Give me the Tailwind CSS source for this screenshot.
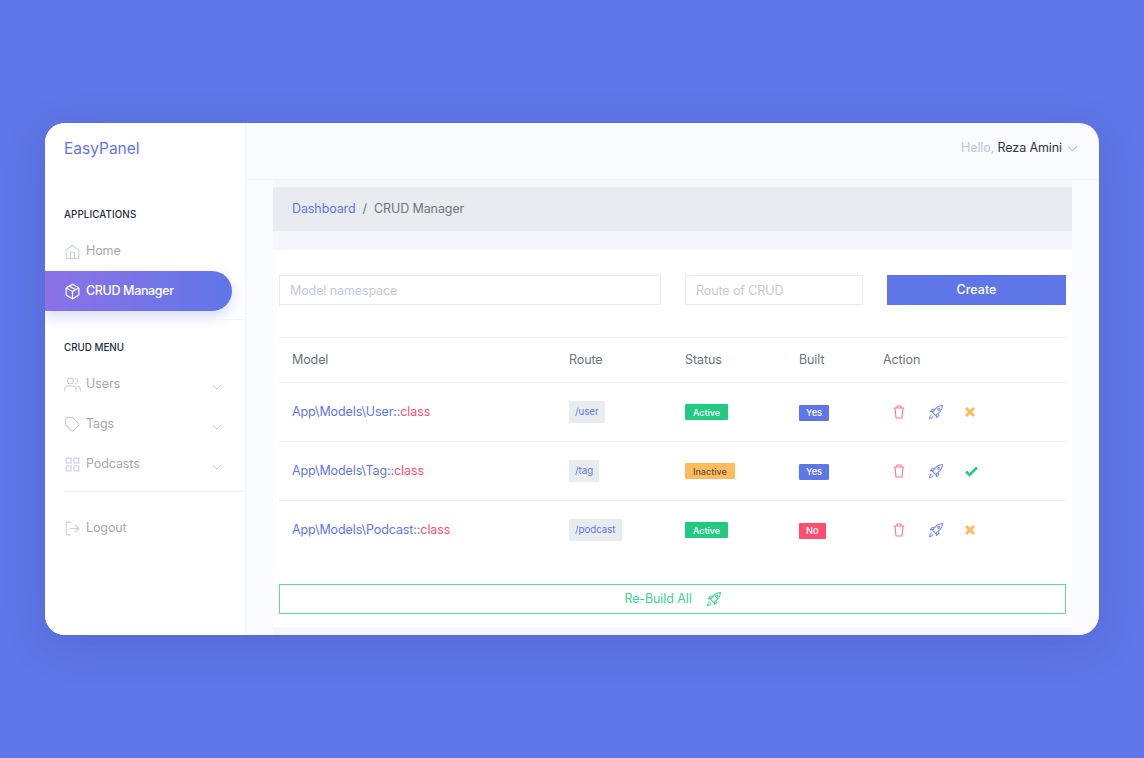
<!DOCTYPE html>
<html>
<head>
<meta charset="utf-8">
<script src="https://cdn.jsdelivr.net/npm/@tailwindcss/browser@4"></script>
</head>
<body class="m-0 h-[758px] w-[1144px] overflow-hidden bg-[#5f76e8] font-['Inter',sans-serif]">
<div class="pt-[123px] pl-[45px]">
<div class="flex h-[512px] w-[1054px] overflow-hidden rounded-[20px] bg-[#f9fbfe] shadow-[0_10px_40px_rgba(40,50,120,0.18)]">
  <!-- sidebar -->
  <aside class="flex w-[200px] shrink-0 flex-col bg-white">
    <div class="pl-[19px] pt-[15px] text-[15.5px] leading-[22px] text-[#5f76e8]">EasyPanel</div>
    <div class="pl-[19px] pt-[48px] text-[9.8px] leading-[14px] font-medium tracking-[0.1px] text-[#1c2d41]">APPLICATIONS</div>
    <div class="mt-[9px] flex h-[40px] items-center pl-[19px] text-[12.5px] tracking-[-0.1px] text-[#a9a9a9]">
      <svg class="mr-[5px] h-[17px] w-[17px]" viewBox="0 0 24 24" fill="none" stroke="#c5cfde" stroke-width="1.5" stroke-linejoin="round"><path d="M3 10l9-7 9 7v11a1 1 0 0 1-1 1H4a1 1 0 0 1-1-1z"/><path d="M9 22V13h6v9"/></svg>Home
    </div>
    <div class="flex h-[40px] w-[187px] items-center rounded-r-[20px] bg-gradient-to-r from-[#8b71e6] to-[#5f76e8] pl-[19px] text-[12.5px] font-medium tracking-[-0.35px] text-white shadow-[0_6px_14px_rgba(95,118,232,0.25)]">
      <svg class="mr-[5px] h-[17px] w-[17px]" viewBox="0 0 24 24" fill="none" stroke="white" stroke-width="1.7" stroke-linejoin="round" stroke-linecap="round"><path d="M21 16V8a2 2 0 0 0-1-1.7l-7-4a2 2 0 0 0-2 0l-7 4A2 2 0 0 0 3 8v8a2 2 0 0 0 1 1.7l7 4a2 2 0 0 0 2 0l7-4a2 2 0 0 0 1-1.7z"/><path d="M3.3 7L12 12l8.7-5M12 22V12M7.5 4.2l9 5.2"/></svg>CRUD Manager
    </div>
    <div class="mt-[8px] ml-[19px] border-t border-[#f1f3f8]"></div>
    <div class="pl-[19px] pt-[21px] text-[9.8px] leading-[14px] font-medium text-[#1c2d41]">CRUD MENU</div>
    <div class="mt-[8px] flex h-[40px] items-center pl-[19px] pr-[23px] pt-[2px] text-[12.5px] tracking-[-0.1px] text-[#a9a9a9]">
      <svg class="mr-[5px] h-[17px] w-[17px]" viewBox="0 0 24 24" fill="none" stroke="#c5cfde" stroke-width="1.5" stroke-linecap="round"><circle cx="9" cy="7" r="4"/><path d="M1 21v-2a5 5 0 0 1 5-5h6a5 5 0 0 1 5 5v2M16 3.1a4 4 0 0 1 0 7.8M23 21v-2a5 5 0 0 0-3.5-4.7"/></svg>Users
      <svg class="mt-[5px] ml-auto h-[10px] w-[10px]" viewBox="0 0 12 12" fill="none" stroke="#b8bfca" stroke-width="1.1"><path d="M1 3.5l5 5 5-5"/></svg>
    </div>
    <div class="flex h-[40px] items-center pl-[19px] pr-[23px] pt-[2px] text-[12.5px] tracking-[-0.1px] text-[#a9a9a9]">
      <svg class="mr-[5px] h-[17px] w-[17px]" viewBox="0 0 24 24" fill="none" stroke="#c5cfde" stroke-width="1.5" stroke-linejoin="round" stroke-linecap="round"><path d="M20.6 13.4l-7.2 7.2a2 2 0 0 1-2.8 0L2 12V2h10l8.6 8.6a2 2 0 0 1 0 2.8z"/><path d="M7 7h.01"/></svg>Tags
      <svg class="mt-[5px] ml-auto h-[10px] w-[10px]" viewBox="0 0 12 12" fill="none" stroke="#b8bfca" stroke-width="1.1"><path d="M1 3.5l5 5 5-5"/></svg>
    </div>
    <div class="flex h-[40px] items-center pl-[19px] pr-[23px] pt-[2px] text-[12.5px] tracking-[-0.1px] text-[#a9a9a9]">
      <svg class="mr-[5px] h-[17px] w-[17px]" viewBox="0 0 24 24" fill="none" stroke="#c5cfde" stroke-width="1.5"><rect x="3" y="3" width="7" height="7"/><rect x="14" y="3" width="7" height="7"/><rect x="14" y="14" width="7" height="7"/><rect x="3" y="14" width="7" height="7"/></svg>Podcasts
      <svg class="mt-[5px] ml-auto h-[10px] w-[10px]" viewBox="0 0 12 12" fill="none" stroke="#b8bfca" stroke-width="1.1"><path d="M1 3.5l5 5 5-5"/></svg>
    </div>
    <div class="mt-[8px] ml-[19px] border-t border-[#f1f3f8]"></div>
    <div class="mt-[16px] flex h-[40px] items-center pl-[19px] text-[12.5px] tracking-[-0.1px] text-[#a9a9a9]">
      <svg class="mr-[5px] h-[17px] w-[17px]" viewBox="0 0 24 24" fill="none" stroke="#c5cfde" stroke-width="1.5" stroke-linecap="round" stroke-linejoin="round"><path d="M9 21H5a2 2 0 0 1-2-2V5a2 2 0 0 1 2-2h4M16 17l5-5-5-5M21 12H9"/></svg>Logout
    </div>
  </aside>
  <!-- main -->
  <main class="flex min-w-0 flex-1 flex-col border-l border-[#f5f7fb]">
    <header class="flex h-[57px] shrink-0 items-start justify-end border-b border-[#f1f3f7] pt-[15px] pr-[21px] text-[12.500px] leading-[18px] tracking-[-0.1px]">
      <span class="pt-[1px] text-[#c0c6d4]">Hello,&nbsp;</span><span class="pt-[1px] text-[#2f3542]">Reza Amini</span>
      <svg class="mt-[5px] ml-[5px] h-[11px] w-[11px]" viewBox="0 0 12 12" fill="none" stroke="#b8bfca" stroke-width="1.1"><path d="M1 3.5l5 5 5-5"/></svg>
    </header>
    <div class="ml-[27px] w-[799px] flex-1 bg-[#f5f7fb] pt-[7px]">
      <nav class="flex h-[44px] items-center bg-[#e9ecef] pl-[19px] text-[12.500px] tracking-[-0.1px]">
        <span class="text-[#5f76e8]">Dashboard</span><span class="mx-[7px] text-[#6c757d]">/</span><span class="text-[#6c757d]">CRUD Manager</span>
      </nav>
      <section class="mt-[19px] h-[377px] bg-white px-[6px] pt-[25px]">
        <form class="flex h-[30px] gap-[24px]">
          <input placeholder="Model namespace" class="h-[30px] w-[382px] border border-[#e9ecef] bg-white px-[10px] text-[12.500px] tracking-[-0.1px] placeholder:text-[#c4c9d8]">
          <input placeholder="Route of CRUD" class="h-[30px] w-[178px] border border-[#e9ecef] bg-white px-[10px] text-[12.500px] tracking-[-0.1px] placeholder:text-[#c4c9d8]">
          <button type="button" class="h-[30px] w-[179px] bg-[#5f76e8] text-[12.500px] font-medium text-white">Create</button>
        </form>
        <div class="mt-[32px] grid grid-cols-[277px_116px_114px_84px_1fr] border-y border-[#eef0f3] h-[46px] items-center pl-[13px] text-[12.500px] tracking-[-0.1px] text-[#6c757d]">
          <div>Model</div><div>Route</div><div>Status</div><div>Built</div><div>Action</div>
        </div>

        <div class="grid h-[59px] grid-cols-[277px_116px_114px_84px_1fr] items-center border-b border-[#eef0f3] pl-[13px] text-[12.500px] tracking-[-0.1px]">
          <div class="text-[#5f76e8]">App\Models\User::<span class="text-[#ff4f70]">class</span></div>
          <div><span class="inline-flex h-[22px] items-center bg-[#e9ecef] px-[6px] text-[9.700px] tracking-normal text-[#5f76e8]">/user</span></div>
          <div><span class="inline-flex h-[16px] items-center rounded-[1px] bg-[#22ca80] px-[8px] text-[9px] font-medium tracking-normal text-white">Active</span></div>
          <div><span class="inline-flex h-[16px] items-center rounded-[1px] bg-[#5f76e8] px-[7px] text-[9.300px] font-medium tracking-normal text-white">Yes</span></div>
          <div class="flex items-center pl-[9px]">
            <svg class="h-[14px] w-[14px]" viewBox="0 0 14 14" fill="none" stroke="#ff7a93" stroke-width="1.2"><path d="M2 3h10M3 3l1 10h6l1-10M5 3V1h4v2"/></svg>
            <svg class="ml-[22px] h-[15px] w-[15px]" viewBox="0 0 14 14" fill="none" stroke="#7d8ff0" stroke-width="1" stroke-linejoin="round"><path d="M4.200 6.800L8 2.500C9.500 1 12 .7 13.500.500 13.300 2 13 4.500 11.500 6L7.200 9.800zM4.800 6.200H2.200L4 4H7M7.800 9.200V11.800L10 10V7M3.500 9c-1.200.6-2 2-2.200 3.700 1.700-.2 3.100-1 3.700-2.200"/><circle cx="10" cy="4" r="1"/></svg>
            <svg class="ml-[21px] h-[12px] w-[12px]" viewBox="0 0 12 12" fill="none" stroke="#ffbc5e" stroke-width="3"><path d="M2 2l8 8M10 2l-8 8"/></svg>
          </div>
        </div>

        <div class="grid h-[59px] grid-cols-[277px_116px_114px_84px_1fr] items-center border-b border-[#eef0f3] pl-[13px] text-[12.500px] tracking-[-0.1px]">
          <div class="text-[#5f76e8]">App\Models\Tag::<span class="text-[#ff4f70]">class</span></div>
          <div><span class="inline-flex h-[22px] items-center bg-[#e9ecef] px-[6px] text-[9.700px] tracking-normal text-[#5f76e8]">/tag</span></div>
          <div><span class="inline-flex h-[16px] items-center rounded-[1px] bg-[#ffbc5e] px-[8px] text-[9px] font-medium tracking-normal text-[#5c5346]">Inactive</span></div>
          <div><span class="inline-flex h-[16px] items-center rounded-[1px] bg-[#5f76e8] px-[7px] text-[9.300px] font-medium tracking-normal text-white">Yes</span></div>
          <div class="flex items-center pl-[9px]">
            <svg class="h-[14px] w-[14px]" viewBox="0 0 14 14" fill="none" stroke="#ff7a93" stroke-width="1.2"><path d="M2 3h10M3 3l1 10h6l1-10M5 3V1h4v2"/></svg>
            <svg class="ml-[22px] h-[15px] w-[15px]" viewBox="0 0 14 14" fill="none" stroke="#7d8ff0" stroke-width="1" stroke-linejoin="round"><path d="M4.200 6.800L8 2.500C9.500 1 12 .7 13.500.500 13.300 2 13 4.500 11.500 6L7.200 9.800zM4.800 6.200H2.200L4 4H7M7.800 9.200V11.800L10 10V7M3.500 9c-1.200.6-2 2-2.200 3.700 1.700-.2 3.100-1 3.700-2.200"/><circle cx="10" cy="4" r="1"/></svg>
            <svg class="ml-[22px] h-[12px] w-[13px]" viewBox="0 0 13 12" fill="none" stroke="#22ca80" stroke-width="2.600"><path d="M1 6.500l3.500 3.500L12 2.500"/></svg>
          </div>
        </div>

        <div class="grid h-[58px] grid-cols-[277px_116px_114px_84px_1fr] items-center pl-[13px] text-[12.500px] tracking-[-0.1px]">
          <div class="text-[#5f76e8]">App\Models\Podcast::<span class="text-[#ff4f70]">class</span></div>
          <div><span class="inline-flex h-[22px] items-center bg-[#e9ecef] px-[6px] text-[9.700px] tracking-normal text-[#5f76e8]">/podcast</span></div>
          <div><span class="inline-flex h-[16px] items-center rounded-[1px] bg-[#22ca80] px-[8px] text-[9px] font-medium tracking-normal text-white">Active</span></div>
          <div><span class="inline-flex h-[16px] items-center rounded-[1px] bg-[#ff4f70] px-[7px] text-[9.300px] font-medium tracking-normal text-white">No</span></div>
          <div class="flex items-center pl-[9px]">
            <svg class="h-[14px] w-[14px]" viewBox="0 0 14 14" fill="none" stroke="#ff7a93" stroke-width="1.2"><path d="M2 3h10M3 3l1 10h6l1-10M5 3V1h4v2"/></svg>
            <svg class="ml-[22px] h-[15px] w-[15px]" viewBox="0 0 14 14" fill="none" stroke="#7d8ff0" stroke-width="1" stroke-linejoin="round"><path d="M4.200 6.800L8 2.500C9.500 1 12 .7 13.500.500 13.300 2 13 4.500 11.500 6L7.200 9.800zM4.800 6.200H2.200L4 4H7M7.800 9.200V11.800L10 10V7M3.500 9c-1.200.6-2 2-2.200 3.700 1.700-.2 3.100-1 3.700-2.200"/><circle cx="10" cy="4" r="1"/></svg>
            <svg class="ml-[21px] h-[12px] w-[12px]" viewBox="0 0 12 12" fill="none" stroke="#ffbc5e" stroke-width="3"><path d="M2 2l8 8M10 2l-8 8"/></svg>
          </div>
        </div>

        <button type="button" class="mt-[25px] flex h-[30px] w-full items-center justify-center border border-[#5dd9a2] bg-white text-[12.500px] tracking-[-0.1px] text-[#3fd393]">Re-Build All
          <svg class="ml-[14px] h-[15px] w-[15px]" viewBox="0 0 14 14" fill="none" stroke="#3fd393" stroke-width="1" stroke-linejoin="round"><path d="M4.200 6.800L8 2.500C9.500 1 12 .7 13.500.500 13.300 2 13 4.500 11.500 6L7.200 9.800zM4.800 6.200H2.200L4 4H7M7.800 9.200V11.800L10 10V7M3.500 9c-1.200.6-2 2-2.200 3.700 1.700-.2 3.100-1 3.700-2.200"/><circle cx="10" cy="4" r="1"/></svg>
        </button>
      </section>
    </div>
  </main>
</div>
</div>
</body>
</html>
